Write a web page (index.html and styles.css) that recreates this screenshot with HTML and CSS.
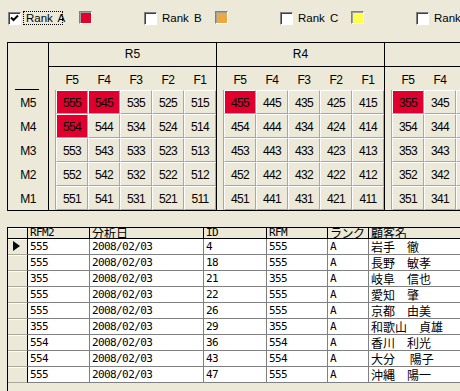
FILE: index.html
```html
<!DOCTYPE html>
<html lang="ja">
<head>
    <meta charset="UTF-8">
    <meta name="viewport" content="width=device-width, initial-scale=1.0">
    <title>RFM分析</title>
    <link rel="stylesheet" href="styles.css">
</head>
<body>
    <div class="ranks">
        <label class="rank">
            <span class="chk"><svg width="11" height="11" viewBox="0 0 11 11"><path d="M2 4.5 L4.5 7 L9 2.5" fill="none" stroke="#000" stroke-width="2"/></svg></span>
            <span class="rank-name focus">Rank A</span>
            <span class="swatch red"></span>
        </label>
        <label class="rank">
            <span class="chk"></span>
            <span class="rank-name">Rank B</span>
            <span class="swatch orange"></span>
        </label>
        <label class="rank">
            <span class="chk"></span>
            <span class="rank-name">Rank C</span>
            <span class="swatch yellow"></span>
        </label>
        <label class="rank">
            <span class="chk"></span>
            <span class="rank-name">Rank D</span>
            <span class="swatch"></span>
        </label>
    </div>

    <div class="matrix">
        <div class="mside">
            <div class="mside-head"></div>
            <div class="mside-row">M5</div>
            <div class="mside-row">M4</div>
            <div class="mside-row">M3</div>
            <div class="mside-row">M2</div>
            <div class="mside-row">M1</div>
        </div>

        <div class="group">
            <div class="group-title">R5</div>
            <div class="group-f"><span>F5</span><span>F4</span><span>F3</span><span>F2</span><span>F1</span></div>
            <div class="cells">
                <div class="cell-row"><span class="cell hot">555</span><span class="cell hot">545</span><span class="cell">535</span><span class="cell">525</span><span class="cell">515</span></div>
                <div class="cell-row"><span class="cell hot">554</span><span class="cell">544</span><span class="cell">534</span><span class="cell">524</span><span class="cell">514</span></div>
                <div class="cell-row"><span class="cell">553</span><span class="cell">543</span><span class="cell">533</span><span class="cell">523</span><span class="cell">513</span></div>
                <div class="cell-row"><span class="cell">552</span><span class="cell">542</span><span class="cell">532</span><span class="cell">522</span><span class="cell">512</span></div>
                <div class="cell-row"><span class="cell">551</span><span class="cell">541</span><span class="cell">531</span><span class="cell">521</span><span class="cell">511</span></div>
            </div>
        </div>

        <div class="group">
            <div class="group-title">R4</div>
            <div class="group-f"><span>F5</span><span>F4</span><span>F3</span><span>F2</span><span>F1</span></div>
            <div class="cells">
                <div class="cell-row"><span class="cell hot">455</span><span class="cell">445</span><span class="cell">435</span><span class="cell">425</span><span class="cell">415</span></div>
                <div class="cell-row"><span class="cell">454</span><span class="cell">444</span><span class="cell">434</span><span class="cell">424</span><span class="cell">414</span></div>
                <div class="cell-row"><span class="cell">453</span><span class="cell">443</span><span class="cell">433</span><span class="cell">423</span><span class="cell">413</span></div>
                <div class="cell-row"><span class="cell">452</span><span class="cell">442</span><span class="cell">432</span><span class="cell">422</span><span class="cell">412</span></div>
                <div class="cell-row"><span class="cell">451</span><span class="cell">441</span><span class="cell">431</span><span class="cell">421</span><span class="cell">411</span></div>
            </div>
        </div>

        <div class="group">
            <div class="group-title">R3</div>
            <div class="group-f"><span>F5</span><span>F4</span><span>F3</span><span>F2</span><span>F1</span></div>
            <div class="cells">
                <div class="cell-row"><span class="cell hot">355</span><span class="cell">345</span><span class="cell">335</span><span class="cell">325</span><span class="cell">315</span></div>
                <div class="cell-row"><span class="cell">354</span><span class="cell">344</span><span class="cell">334</span><span class="cell">324</span><span class="cell">314</span></div>
                <div class="cell-row"><span class="cell">353</span><span class="cell">343</span><span class="cell">333</span><span class="cell">323</span><span class="cell">313</span></div>
                <div class="cell-row"><span class="cell">352</span><span class="cell">342</span><span class="cell">332</span><span class="cell">322</span><span class="cell">312</span></div>
                <div class="cell-row"><span class="cell">351</span><span class="cell">341</span><span class="cell">331</span><span class="cell">321</span><span class="cell">311</span></div>
            </div>
        </div>
    </div>

    <div class="table">
        <div class="trow thead">
            <div class="tc sel"></div>
            <div class="tc w-rfm2">RFM2</div>
            <div class="tc w-date jp">分析日</div>
            <div class="tc w-id">ID</div>
            <div class="tc w-rfm">RFM</div>
            <div class="tc w-rank jp">ランク</div>
            <div class="tc w-name jp">顧客名</div>
        </div>
        <div class="trow">
            <div class="tc sel"><span class="current"></span></div>
            <div class="tc w-rfm2">555</div><div class="tc w-date">2008/02/03</div><div class="tc w-id">4</div><div class="tc w-rfm">555</div><div class="tc w-rank">A</div><div class="tc w-name jp">岩手　徹</div>
        </div>
        <div class="trow">
            <div class="tc sel"></div>
            <div class="tc w-rfm2">555</div><div class="tc w-date">2008/02/03</div><div class="tc w-id">18</div><div class="tc w-rfm">555</div><div class="tc w-rank">A</div><div class="tc w-name jp">長野　敏孝</div>
        </div>
        <div class="trow">
            <div class="tc sel"></div>
            <div class="tc w-rfm2">355</div><div class="tc w-date">2008/02/03</div><div class="tc w-id">21</div><div class="tc w-rfm">355</div><div class="tc w-rank">A</div><div class="tc w-name jp">岐阜　信也</div>
        </div>
        <div class="trow">
            <div class="tc sel"></div>
            <div class="tc w-rfm2">555</div><div class="tc w-date">2008/02/03</div><div class="tc w-id">22</div><div class="tc w-rfm">555</div><div class="tc w-rank">A</div><div class="tc w-name jp">愛知　肇</div>
        </div>
        <div class="trow">
            <div class="tc sel"></div>
            <div class="tc w-rfm2">555</div><div class="tc w-date">2008/02/03</div><div class="tc w-id">26</div><div class="tc w-rfm">555</div><div class="tc w-rank">A</div><div class="tc w-name jp">京都　由美</div>
        </div>
        <div class="trow">
            <div class="tc sel"></div>
            <div class="tc w-rfm2">355</div><div class="tc w-date">2008/02/03</div><div class="tc w-id">29</div><div class="tc w-rfm">355</div><div class="tc w-rank">A</div><div class="tc w-name jp">和歌山　貞雄</div>
        </div>
        <div class="trow">
            <div class="tc sel"></div>
            <div class="tc w-rfm2">554</div><div class="tc w-date">2008/02/03</div><div class="tc w-id">36</div><div class="tc w-rfm">554</div><div class="tc w-rank">A</div><div class="tc w-name jp">香川　利光</div>
        </div>
        <div class="trow">
            <div class="tc sel"></div>
            <div class="tc w-rfm2">554</div><div class="tc w-date">2008/02/03</div><div class="tc w-id">43</div><div class="tc w-rfm">554</div><div class="tc w-rank">A</div><div class="tc w-name jp">大分　 陽子</div>
        </div>
        <div class="trow">
            <div class="tc sel"></div>
            <div class="tc w-rfm2">555</div><div class="tc w-date">2008/02/03</div><div class="tc w-id">47</div><div class="tc w-rfm">555</div><div class="tc w-rank">A</div><div class="tc w-name jp">沖縄　陽一</div>
        </div>
    </div>
</body>
</html>
```

FILE: styles.css
```css
body {
    margin: 0;
    width: 460px;
    height: 391px;
    overflow: hidden;
    background: #ece9d8;
    color: #000;
    font-family: "Liberation Sans", Arial, sans-serif;
    font-size: 11px;
}

/* rank checkboxes */
.ranks {
    display: flex;
    height: 42px;
    padding: 11px 0 0 8px;
    box-sizing: border-box;
}
.rank {
    flex: none;
    width: 136px;
    display: flex;
    align-items: flex-start;
}
.chk {
    width: 13px;
    height: 13px;
    margin-top: 1px;
    box-sizing: border-box;
    background: #fff;
    border: 1px solid;
    border-color: #808080 #fff #fff #808080;
    box-shadow: inset 1px 1px 0 #404040;
}
.chk svg {
    display: block;
}
.rank-name {
    margin-left: 2px;
    width: 40px;
    height: 14px;
    box-sizing: border-box;
    padding: 0 2px;
    line-height: 12px;
    font-size: 11.5px;
    border: 1px dotted transparent;
    white-space: nowrap;
    word-spacing: 2px;
}
.rank-name.focus {
    border-color: #000;
}
.swatch {
    margin-left: 16px;
    width: 13px;
    height: 13px;
    box-sizing: border-box;
    border: 1px solid;
    border-color: #808080 #fff #fff #808080;
    box-shadow: inset 1px 1px 0 #a0a0a0;
}
.red { background: #e1002d; }
.orange { background: #eda844; }
.yellow { background: #ffff4d; }

/* RFM matrix */
.matrix {
    display: flex;
    margin-left: 7px;
    height: 169px;
    box-sizing: border-box;
    border: 1px solid #000;
    border-right: 0;
    font-size: 12px;
}
.mside {
    flex: none;
    width: 41px;
    box-sizing: border-box;
    border-right: 1px solid #000;
}
.mside-head {
    height: 47px;
    background: linear-gradient(#000, #000) no-repeat 7px 100% / 24px 1px;
}
.mside-row {
    height: 24px;
    line-height: 26px;
    text-align: center;
    letter-spacing: -0.5px;
}
.group {
    flex: none;
    width: 168px;
    box-sizing: border-box;
    border-right: 1px solid #000;
}
.group-title {
    height: 24px;
    box-sizing: border-box;
    border-bottom: 1px solid #000;
    text-align: center;
    line-height: 23px;
}
.group-f {
    display: flex;
    height: 23px;
    padding: 2px 0 0 7px;
    box-sizing: border-box;
    align-items: center;
    letter-spacing: -0.5px;
}
.group-f span {
    width: 32px;
    text-align: center;
}
.cells {
    height: 120px;
    margin-left: 6px;
    border-left: 1px solid #aca899;
}
.cell-row {
    display: flex;
    height: 24px;
}
.cell {
    flex: none;
    width: 32px;
    height: 24px;
    box-sizing: border-box;
    border: 1px solid;
    border-color: #fff #aca899 #aca899 #fff;
    display: flex;
    align-items: center;
    justify-content: center;
    padding-top: 2px;
    letter-spacing: -0.7px;
}
.cell.hot {
    background: #e1002d;
}

/* data grid */
.table {
    margin: 16px 0 0 7px;
    height: 164px;
    border-left: 1px solid #000;
    border-top: 1px solid #000;
    font-family: "DejaVu Sans Mono", "Noto Sans CJK JP", monospace;
    font-size: 11px;
    letter-spacing: -0.6px;
}
.trow {
    display: flex;
    height: 16px;
}
.thead {
    height: 11px;
}
.tc {
    flex: none;
    box-sizing: border-box;
    padding-left: 2px;
    border-right: 1px solid #808080;
    border-bottom: 1px solid #808080;
    background: #fff;
    line-height: 15px;
    white-space: nowrap;
    overflow: hidden;
}
.thead .tc {
    background: #ece9d8;
    border-color: #000;
    line-height: 10px;
}
.jp {
    font-family: "Noto Sans CJK JP", sans-serif;
    font-size: 12px;
    letter-spacing: 0;
}
.thead .w-rank {
    letter-spacing: -0.5px;
}
.sel {
    width: 20px;
    background: #ece9d8;
    border-right-color: #000;
    border-bottom-color: #aca899;
    box-shadow: inset 0 1px 0 #fff;
    position: relative;
}
.current {
    position: absolute;
    left: 5px;
    top: 2px;
    border-left: 7px solid #000;
    border-top: 5px solid transparent;
    border-bottom: 5px solid transparent;
}
.w-rfm2 { width: 62px; }
.w-date { width: 114px; }
.w-id { width: 63px; }
.w-rfm { width: 61px; }
.w-rank { width: 41px; }
.w-name { width: 120px; }
```
